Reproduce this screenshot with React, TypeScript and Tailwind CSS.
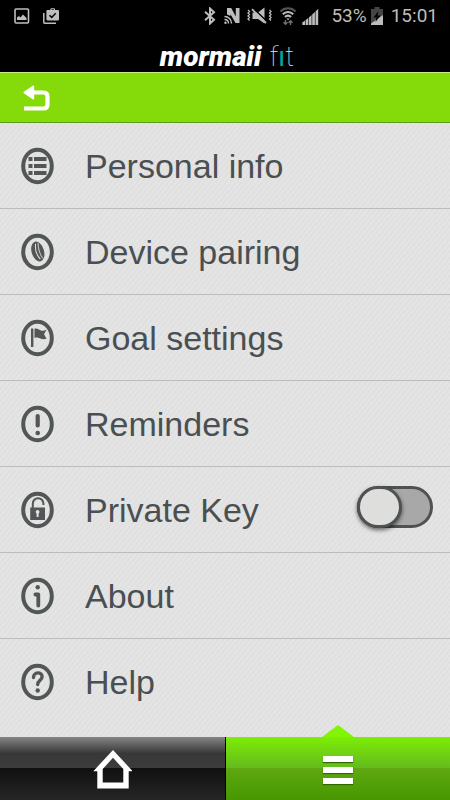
import React, { useState } from "react"

type MenuItem = {
  label: string
  icon: React.ReactNode
}

const RoundIcon = ({ children }: { children: React.ReactNode }) => (
  <svg className="h-[38px] w-[34px] shrink-0" viewBox="0 0 34 38" fill="none" aria-hidden="true">
    <ellipse cx="16.5" cy="19" rx="14.3" ry="16.3" stroke="#525656" strokeWidth="4" />
    {children}
  </svg>
)

const ListIcon = () => (
  <RoundIcon>
    <path
      d="M7.5 10h4v4h-4zM13 10h12.5v4H13zM7.5 17h4v4h-4zM13 17h12.5v4H13zM7.5 24h4v4h-4zM13 24h12.5v4H13z"
      fill="#525656"
    />
  </RoundIcon>
)

const BandIcon = () => (
  <RoundIcon>
    <g transform="rotate(-17 16.8 18.5)">
      <ellipse cx="16.8" cy="18.5" rx="6.2" ry="10.2" fill="#525656" />
      <path d="M17 10.500c-2.400 5-2.400 11 0 16" stroke="#e2e2e2" strokeWidth="1" />
      <path d="M19.500 10.500c-1.600 5-1.600 11 0 16" stroke="#e2e2e2" strokeWidth=".8" />
    </g>
  </RoundIcon>
)

const FlagIcon = () => (
  <RoundIcon>
    <path d="M10 9.500h2.400V28H10z" fill="#525656" />
    <path
      d="M13.500 10c3-1.500 4.500 1.800 7.500 1.800 1.800 0 3.500-.6 4.600-1l-2.600 4.400 2.600 4.600c-3 .8-4.800.4-6.800-.6-1.800-.9-3.600-.8-5.300-.2z"
      fill="#525656"
    />
  </RoundIcon>
)

const ExclamationIcon = () => (
  <RoundIcon>
    <path d="M16.700 11v9.500" stroke="#525656" strokeWidth="4.200" strokeLinecap="round" />
    <circle cx="16.700" cy="28" r="2.300" fill="#525656" />
  </RoundIcon>
)

const LockIcon = () => (
  <RoundIcon>
    <path d="M11.800 17v-4.500a5.300 5.300 0 0 1 10.600 0v1.500" stroke="#525656" strokeWidth="2" />
    <path d="M9.200 16.500H24V29H9.200z" fill="#525656" />
    <circle cx="16.600" cy="20.800" r="1.900" fill="#e2e2e2" />
    <path d="M15.600 21h2v5h-2z" fill="#e2e2e2" />
  </RoundIcon>
)

const InfoIcon = () => (
  <RoundIcon>
    <circle cx="16.700" cy="10.200" r="2.200" fill="#525656" />
    <path
      d="M14.400 17.500h2.900v11"
      stroke="#525656"
      strokeWidth="3.800"
      strokeLinecap="round"
      strokeLinejoin="round"
    />
  </RoundIcon>
)

const QuestionIcon = () => (
  <RoundIcon>
    <path
      d="M12.500 14.500c0-6 8.600-6 8.600-.8 0 3.600-4.400 3.600-4.400 7.800"
      stroke="#525656"
      strokeWidth="3.400"
      strokeLinecap="round"
    />
    <circle cx="16.700" cy="27.500" r="2.200" fill="#525656" />
  </RoundIcon>
)

const menuItems: MenuItem[] = [
  { label: "Personal info", icon: <ListIcon /> },
  { label: "Device pairing", icon: <BandIcon /> },
  { label: "Goal settings", icon: <FlagIcon /> },
  { label: "Reminders", icon: <ExclamationIcon /> },
  { label: "Private Key", icon: <LockIcon /> },
  { label: "About", icon: <InfoIcon /> },
  { label: "Help", icon: <QuestionIcon /> },
]

const StatusBar = () => (
  <div className="flex h-8 items-center justify-between pr-3 pl-3.5 text-[#bdbdbd]">
    <div className="flex items-center gap-[13px]">
      <svg className="h-4 w-4" viewBox="0 0 16 16" fill="none" aria-hidden="true">
        <rect x="1" y="1" width="13.500" height="14" rx="1" stroke="currentColor" strokeWidth="1.600" />
        <path d="M3 12V9.500L5 8l1.500 1.500L9 6.500l3.500 3.500v2z" fill="currentColor" />
      </svg>
      <svg className="h-4 w-4" viewBox="0 0 16 16" fill="none" aria-hidden="true">
        <path d="M.8 5v9.500c0 .4.300.7.700.7H13" stroke="currentColor" strokeWidth="1.500" />
        <path
          d="M7.300 2V1.500C7.300.7 8 .2 8.700.2h2c.8 0 1.400.5 1.400 1.300V2h2.700c.7 0 1.200.5 1.200 1.200v8c0 .7-.5 1.200-1.200 1.200H4.600c-.7 0-1.200-.5-1.200-1.200v-8c0-.7.500-1.200 1.200-1.200z"
          fill="currentColor"
        />
        <path d="M8.500 1.300h2.400V2H8.500z" fill="#000" />
        <path d="m6.500 7.200 2.200 2.200 4-4.200" stroke="#000" strokeWidth="1.500" />
      </svg>
    </div>
    <div className="flex items-center">
      <svg className="mr-2 h-[18px] w-3" viewBox="0 0 12 18" fill="none" aria-hidden="true">
        <path d="m1 4.800 9 8L6 16.500v-15l4 3.700-9 8" stroke="currentColor" strokeWidth="2" />
      </svg>
      <svg className="mr-[7px] h-[18px] w-4" viewBox="0 0 16 18" fill="none" aria-hidden="true">
        <path d="M3 7.500V1h4.200l4.600 8.500V1h3.700v15h-4L6.500 7.200v1.800z" fill="currentColor" />
        <path
          d="M.5 9.500c4 0 7 3 7 7M.5 12.500c2.500 0 4 1.500 4 4"
          stroke="currentColor"
          strokeWidth="1.400"
        />
        <circle cx="1.500" cy="15.700" r="1.200" fill="currentColor" />
      </svg>
      <svg className="mr-2 h-[18px] w-[25px]" viewBox="0 0 25 18" fill="none" aria-hidden="true">
        <path d="M5.500 5.500H11L17.500.5v16L11 12H5.500z" fill="currentColor" />
        <path d="m6.500 1.500 13 12.500" stroke="#000" strokeWidth="1.500" />
        <path d="m5 2.200 14 13.800" stroke="currentColor" strokeWidth="1.800" />
        <path
          d="M1 3l1.500 1.500L1 6l1.500 1.500L1 9l1.500 1.500L1 12l1.500 1.500M22.500 3 24 4.500 22.500 6 24 7.500 22.500 9l1.500 1.500-1.500 1.500 1.500 1.500"
          stroke="currentColor"
          strokeWidth="1.300"
        />
      </svg>
      <svg className="mr-1.5 h-[19px] w-4" viewBox="0 0 16 19" fill="none" aria-hidden="true">
        <path d="M.5 4.500c4-4.500 11-4.500 15 0" stroke="#555" strokeWidth="2" />
        <path
          d="M2.800 7.200c2.800-3 7.600-3 10.400 0M5 10c1.600-1.800 4.400-1.800 6 0"
          stroke="currentColor"
          strokeWidth="2.100"
        />
        <path d="m6.300 11.500 1.700 1.800 1.700-1.800z" fill="currentColor" />
        <path
          d="M5.500 13v4.500M3.500 15.300l2 2 2-2M10.500 18v-4.500M8.500 15.700l2-2 2 2"
          stroke="#707070"
          strokeWidth="1.400"
        />
      </svg>
      <svg
        className="mr-3 h-[17px] w-[17px]"
        viewBox="0 0 17 17"
        fill="currentColor"
        aria-hidden="true">
        <path d="M.3 14.500 3 12.500V17H.3zM3.600 12l2.700-2v7H3.600zM6.900 9.500l2.700-2.500v10H6.900zM10.200 6.500l2.700-2.500v13h-2.700zM13.500 3.500 16.200.8V17h-2.700z" />
      </svg>
      <span className="mr-1 text-[19px] leading-6">53%</span>
      <svg className="mr-2 h-[18px] w-3" viewBox="0 0 12 18" aria-hidden="true">
        <path d="M3.500 0h5v2H12v8L0 17V2h3.500z" fill="#454545" />
        <path d="M0 16.500 12 8v10H0z" fill="currentColor" />
        <path d="M7.500 4 2.500 10.500h3L4.500 15l5-6.500h-3z" fill="#000" />
      </svg>
      <span className="text-[19px] leading-6">15:01</span>
    </div>
  </div>
)

const Brand = () => (
  <h1 className="flex h-10 items-center justify-center gap-2 pt-2.5 pl-1 leading-7 text-white antialiased">
    <span className="text-[28px] font-black italic">mormaii</span>
    <span className="text-[28px] font-thin text-[#e0e0e0]">
      f<span className="font-normal text-[#00a5a5]">ı</span>t
    </span>
  </h1>
)

const BottomNav = () => (
  <nav className="flex h-[63px]">
    <a
      href="#home"
      aria-label="Home"
      className="flex flex-1 items-center justify-center border-r border-black bg-[linear-gradient(#858585,#383838_26%,#3c3c3c_49%,#101010_49%,#262626)]">
      <svg className="h-10 w-10" viewBox="0 0 40 40" fill="none" aria-hidden="true">
        <path
          fillRule="evenodd"
          d="M21 1 1.300 22.200H5.300V39.500h31.400V22.200h4zM21 8.800 31.300 20v13.500H10.700V20z"
          fill="#fff"
        />
      </svg>
    </a>
    <a
      href="#menu"
      aria-label="Menu"
      className="relative flex flex-1 items-center justify-center bg-[linear-gradient(#7eed06,#64bb1e_49%,#5fa812_49%,#479700)]">
      <svg
        className="absolute bottom-full left-1/2 h-3 w-8 -translate-x-1/2"
        viewBox="0 0 32 12"
        aria-hidden="true">
        <path d="M16 0 32 12H0z" fill="#82f505" />
      </svg>
      <span className="mt-0.5 flex flex-col gap-[5px]">
        <span className="h-1.5 w-[30px] bg-white shadow-[0_1px_1px_#2f6a00]" />
        <span className="h-1.5 w-[30px] bg-white shadow-[0_1px_1px_#2f6a00]" />
        <span className="h-1.5 w-[30px] bg-white shadow-[0_1px_1px_#2f6a00]" />
      </span>
    </a>
  </nav>
)

const App = () => {
  const [isKeyEnabled, setIsKeyEnabled] = useState(false)

  return (
    <div className="flex min-h-screen flex-col bg-black font-[Roboto,sans-serif]">
      <header>
        <StatusBar />
        <Brand />
        <div className="flex h-[51px] items-center border-t border-b border-t-[#c4ee80] border-b-[#5f9a20] bg-[#85db09] pl-[23px]">
          <button type="button" aria-label="Back">
            <svg className="h-7 w-7" viewBox="0 0 28 28" fill="none" aria-hidden="true">
              <path
                d="M9 8.500h11.500c2.500 0 4 1.500 4 4v8c0 2.500-1.500 4-4 4H1"
                stroke="#fff"
                strokeWidth="4.200"
              />
              <path
                d="M10.200 2.500v12L1.400 8.500z"
                fill="#fff"
                stroke="#fff"
                strokeWidth="2"
                strokeLinejoin="round"
              />
            </svg>
          </button>
        </div>
      </header>

      <main className="flex-1 bg-[#e2e2e2] bg-[repeating-linear-gradient(130deg,#e4e4e4_0px,#e4e4e4_2px,#dddddd_3px,#e4e4e4_4px)] font-['Liberation_Sans',Arial,sans-serif] text-[34px] leading-10 text-[#4a4f52]">
        <ul>
          {menuItems.map(({ label, icon }) => (
            <li
              key={label}
              className="flex h-[86px] items-center border-b border-[#bcbcbc] pr-[17px] pl-[21px] last:border-transparent">
              {label === "Private Key" ? (
                <label className="flex flex-1 items-center gap-[30px]">
                  {icon}
                  <span className="flex-1">{label}</span>
                  <input
                    type="checkbox"
                    role="switch"
                    checked={isKeyEnabled}
                    onChange={e => setIsKeyEnabled(e.target.checked)}
                    className="mb-1.5 h-[42px] w-[76px] appearance-none rounded-full border-[3px] border-[#4f5252] bg-[#a8a8a8] before:-mt-[3px] before:-ml-[3px] before:block before:h-[42px] before:w-[45px] before:rounded-full before:border-[3px] before:border-[#4f5252] before:bg-[#dededc] before:shadow-[0_2px_4px_#00000090] checked:bg-[#85db09] checked:before:ml-7"
                  />
                </label>
              ) : (
                <a href="#" className="flex flex-1 items-center gap-[30px]">
                  {icon}
                  {label}
                </a>
              )}
            </li>
          ))}
        </ul>
      </main>

      <BottomNav />
    </div>
  )
}

export default App
